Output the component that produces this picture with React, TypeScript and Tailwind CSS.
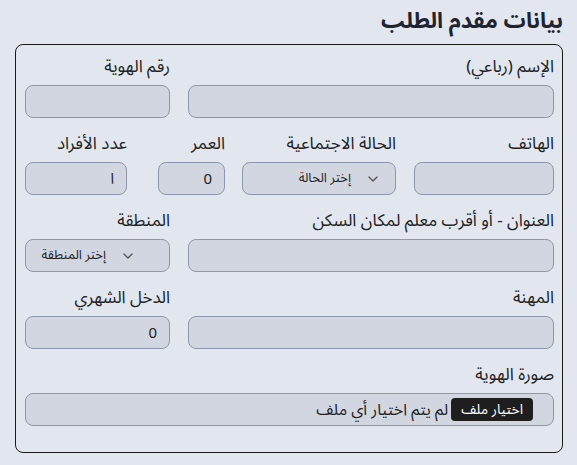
import React from "react";
import { ChevronDown } from "lucide-react";

const inputCls =
  "h-[33px] w-full rounded-lg border border-[#8e97ab] bg-[#d2d6e1] px-3 text-[15px] text-[#222] outline-none";

function Field({ label, className, children }: { label: string; className?: string; children: React.ReactNode }) {
  return (
    <div className={`flex flex-col ${className ?? ""}`}>
      <label className="mb-[7px] h-[21px] text-[17px] leading-[21px] text-[#222]">{label}</label>
      {children}
    </div>
  );
}

function Select({ placeholder, pad }: { placeholder: string; pad: string }) {
  return (
    <div
      className={`flex h-[33px] w-full items-center gap-[14px] rounded-lg border border-[#8e97ab] bg-[#d2d6e1] text-[13px] text-[#222] ${pad}`}
    >
      <ChevronDown size={16} strokeWidth={2} className="text-[#555]" />
      <span>{placeholder}</span>
    </div>
  );
}

export default function App() {
  return (
    <div
      dir="rtl"
      className="min-h-[465px] w-[577px] bg-[#e2e7ef] pl-[15px] pr-[14px]"
      style={{ fontFamily: '"Noto Sans Arabic", "DejaVu Sans", sans-serif' }}
    >
      <h2 className="py-[2px] text-[22px] font-bold leading-[38px] text-[#1f2530]">بيانات مقدم الطلب</h2>
      <fieldset className="mt-[2px] h-[409px] rounded-lg border border-[#1a1a1a] pl-[9px] pr-[8px] pt-[12px]">
        <div className="flex gap-[18px]">
          <Field label="الإسم (رباعي)" className="w-[366px]">
            <input className={inputCls} />
          </Field>
          <Field label="رقم الهوية" className="w-[145px]">
            <input className={inputCls} />
          </Field>
        </div>

        <div className="mt-[16px] flex">
          <Field label="الهاتف" className="w-[140px]">
            <input className={inputCls} />
          </Field>
          <Field label="الحالة الاجتماعية" className="mr-[18px] w-[154px]">
            <Select placeholder="إختر الحالة" pad="pr-[14px]" />
          </Field>
          <Field label="العمر" className="mr-[17px] w-[67px]">
            <input className={inputCls} defaultValue="0" />
          </Field>
          <Field label="عدد الأفراد" className="mr-[31px] w-[102px]">
            <input className={inputCls} defaultValue="ا" />
          </Field>
        </div>

        <div className="mt-[16px] flex gap-[18px]">
          <Field label="العنوان - أو أقرب معلم لمكان السكن" className="w-[366px]">
            <input className={inputCls} />
          </Field>
          <Field label="المنطقة" className="w-[145px]">
            <Select placeholder="إختر المنطقة" pad="pr-[33px]" />
          </Field>
        </div>

        <div className="mt-[16px] flex gap-[18px]">
          <Field label="المهنة" className="w-[366px]">
            <input className={inputCls} />
          </Field>
          <Field label="الدخل الشهري" className="w-[145px]">
            <input className={inputCls} defaultValue="0" />
          </Field>
        </div>

        <div className="mt-[16px]">
          <Field label="صورة الهوية" className="w-full">
            <div className="flex h-[33px] w-full items-center rounded-lg border border-[#8e97ab] bg-[#d2d6e1] pr-[20px] text-[16px] text-[#222]">
              <span className="rounded-[4px] bg-[#1e1e1e] px-[10px] py-[1px] text-[14px] text-white">اختيار ملف</span>
              <span className="mr-[3px]">لم يتم اختيار أي ملف</span>
            </div>
          </Field>
        </div>
      </fieldset>
    </div>
  );
}
